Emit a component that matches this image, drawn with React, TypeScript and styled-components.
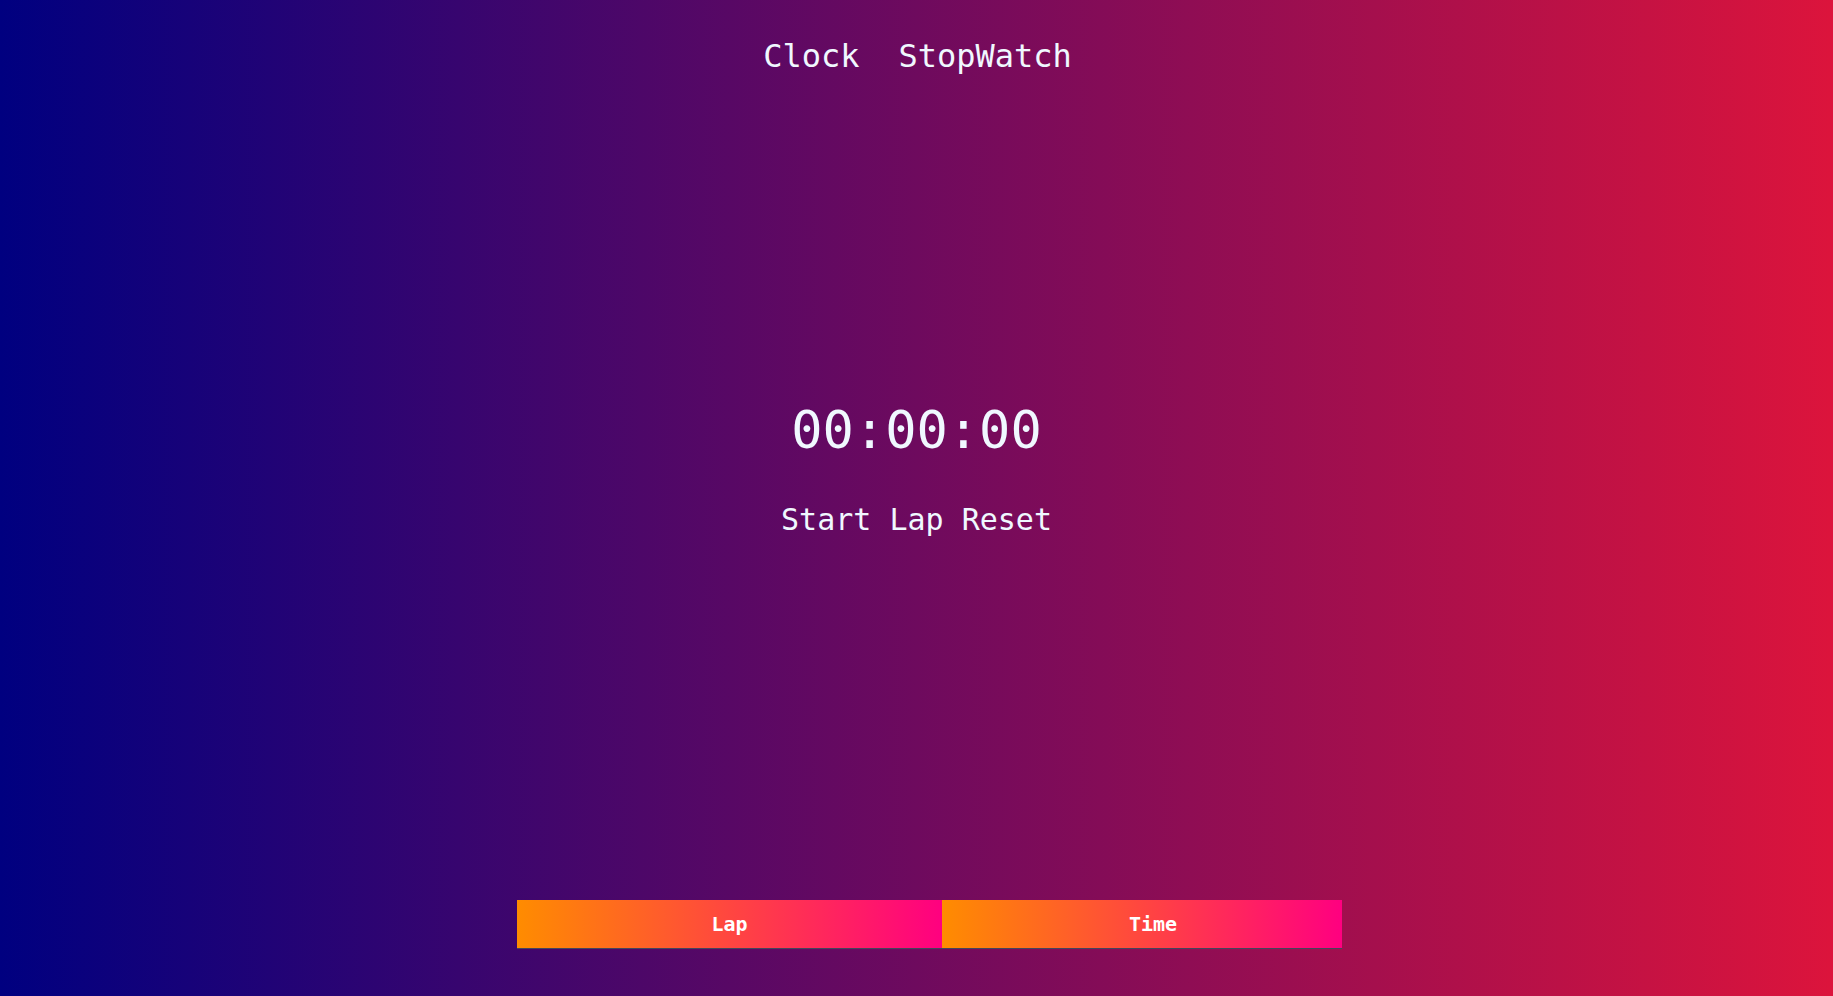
import React from "react";
import styled, { createGlobalStyle } from "styled-components";

const GlobalStyle = createGlobalStyle`
  html, body {
    margin: 0;
    padding: 0;
  }
  body {
    font-family: "DejaVu Sans Mono", "Liberation Mono", monospace;
    color: aliceblue;
  }
`;

const Page = styled.div`
  height: 996px;
  display: flex;
  flex-direction: column;
  align-items: center;
  background: linear-gradient(to right, #000080, #dc143c);
  overflow: hidden;
`;

const Nav = styled.nav`
  display: flex;
  gap: 39px;
  padding-top: 37px;
  padding-left: 2px;
`;

const NavLink = styled.a`
  font-size: 32px;
  line-height: normal;
  color: aliceblue;
  text-decoration: none;
  cursor: pointer;
`;

const Display = styled.div`
  margin-top: 325px;
  font-size: 52px;
  line-height: normal;
`;

const Controls = styled.div`
  margin-top: 42px;
  font-size: 30px;
  line-height: normal;
  white-space: pre;
`;

const ControlButton = styled.button`
  font: inherit;
  color: aliceblue;
  background: transparent;
  border: none;
  padding: 0;
  cursor: pointer;
`;

const TableWrap = styled.div`
  margin-top: 363px;
  padding-left: 26px;
`;

const LapTable = styled.table`
  border-collapse: collapse;
  border-bottom: 1px solid #45455a;
`;

const HeadCell = styled.th<{ $w: number; $shift?: number }>`
  width: ${(p) => p.$w}px;
  height: 48px;
  padding: 0 0 0 ${(p) => p.$shift ?? 0}px;
  box-sizing: border-box;
  background: linear-gradient(to right, #ff8c00, #ff0080);
  color: #fff;
  font-family: "DejaVu Sans Mono", monospace;
  font-weight: bold;
  font-size: 20px;
  text-align: center;
`;

export default function App() {
  return (
    <>
      <GlobalStyle />
      <Page>
        <Nav>
          <NavLink>Clock</NavLink>
          <NavLink>StopWatch</NavLink>
        </Nav>
        <Display>00:00:00</Display>
        <Controls>
          <ControlButton>Start</ControlButton> <ControlButton>Lap</ControlButton>{" "}
          <ControlButton>Reset</ControlButton>
        </Controls>
        <TableWrap>
          <LapTable>
            <thead>
              <tr>
                <HeadCell $w={425}>Lap</HeadCell>
                <HeadCell $w={400} $shift={22}>
                  Time
                </HeadCell>
              </tr>
            </thead>
            <tbody />
          </LapTable>
        </TableWrap>
      </Page>
    </>
  );
}
